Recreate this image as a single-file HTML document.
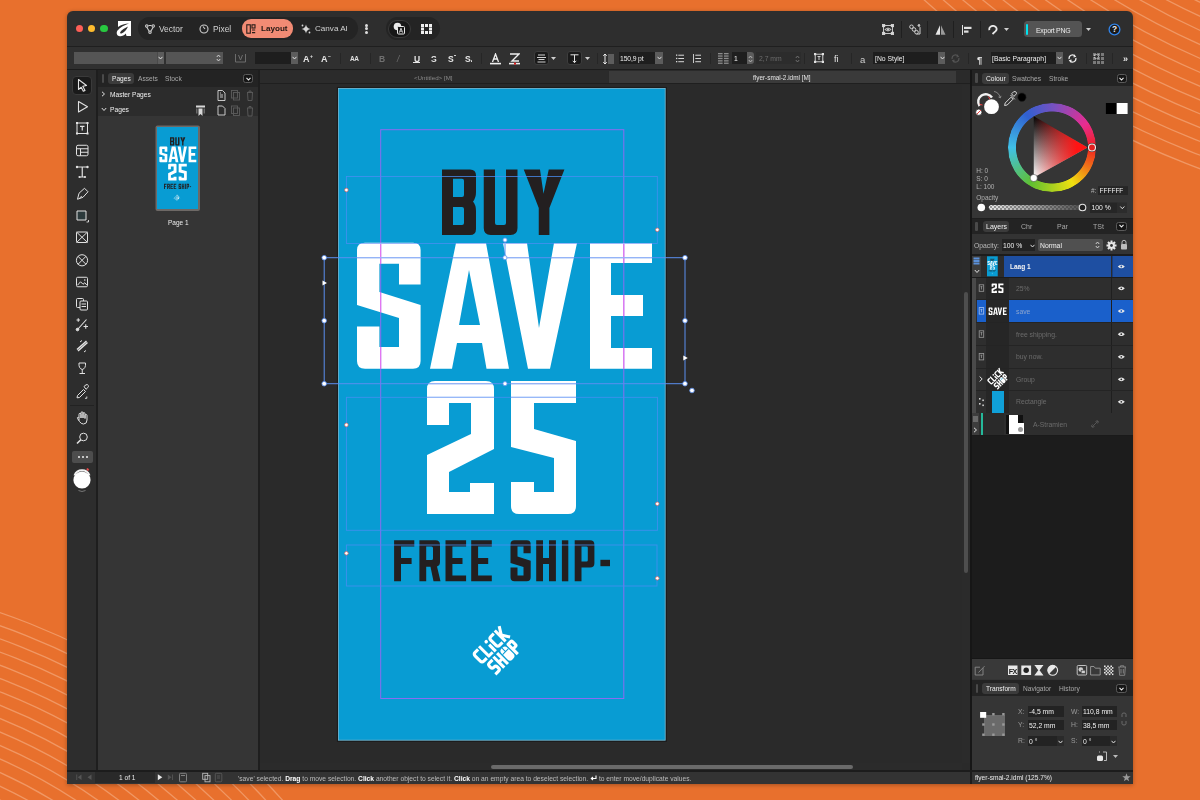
<!DOCTYPE html>
<html><head><meta charset="utf-8">
<style>
*{margin:0;padding:0;box-sizing:border-box}
html,body{width:1200px;height:800px;overflow:hidden;background:#e8702d;font-family:"Liberation Sans",sans-serif;color:#ddd}
.a{position:absolute}
#win{position:absolute;left:67px;top:11px;width:1066px;height:773px;background:#2e2e2e;border-radius:6px 6px 1px 1px;box-shadow:0 1px 4px rgba(0,0,0,.3)}
.t{position:absolute;white-space:nowrap;font-size:7px;line-height:1;will-change:transform;margin-top:0.8px}
</style></head><body>
<!-- background wavy lines -->
<svg class="a" style="left:0;top:0" width="1200" height="800" viewBox="0 0 1200 800">
 <g fill="none" stroke="#f3a577" stroke-width="1.3" opacity="0.75"><circle cx="1499" cy="-629" r="852.0"/><circle cx="1499" cy="-629" r="839.2"/><circle cx="1499" cy="-629" r="826.4"/><circle cx="1499" cy="-629" r="813.6"/><circle cx="1499" cy="-629" r="800.8"/><circle cx="1499" cy="-629" r="788.0"/><circle cx="1499" cy="-629" r="775.2"/><circle cx="1499" cy="-629" r="762.4"/><circle cx="1499" cy="-629" r="749.6"/><circle cx="1499" cy="-629" r="736.8"/><circle cx="1499" cy="-629" r="724.0"/><circle cx="1499" cy="-629" r="711.2"/><circle cx="1499" cy="-629" r="698.4"/><circle cx="-215" cy="1243" r="666.0"/><circle cx="-215" cy="1243" r="653.6"/><circle cx="-215" cy="1243" r="641.2"/><circle cx="-215" cy="1243" r="628.8"/><circle cx="-215" cy="1243" r="616.4"/><circle cx="-215" cy="1243" r="604.0"/><circle cx="-215" cy="1243" r="591.6"/><circle cx="-215" cy="1243" r="579.2"/><circle cx="-215" cy="1243" r="566.8"/><circle cx="-215" cy="1243" r="554.4"/><circle cx="-215" cy="1243" r="542.0"/><circle cx="-215" cy="1243" r="529.6"/><circle cx="-215" cy="1243" r="517.2"/><circle cx="-215" cy="1243" r="504.8"/><circle cx="-215" cy="1243" r="492.4"/><circle cx="-215" cy="1243" r="480.0"/></g>
</svg>

<div id="win"></div>
<div class="a" style="left:67px;top:46px;width:1066px;height:1px;background:#1f1f1f"></div>
<div class="a" style="left:67px;top:47px;width:1066px;height:22px;background:#303030"></div>
<div class="a" style="left:67px;top:69px;width:1066px;height:1px;background:#1c1c1c"></div>
<!-- left tools -->
<div class="a" style="left:67px;top:70px;width:29px;height:701px;background:#2d2d2d"></div>
<div class="a" style="left:96px;top:70px;width:2px;height:701px;background:#1e1e1e"></div>
<!-- pages panel -->
<div class="a" style="left:98px;top:70px;width:160px;height:701px;background:#353535"></div>
<div class="a" style="left:98px;top:70px;width:160px;height:17px;background:#232323"></div>
<div class="a" style="left:98px;top:87px;width:160px;height:29px;background:#2c2c2c"></div>
<div class="a" style="left:258px;top:70px;width:2px;height:701px;background:#1e1e1e"></div>
<!-- canvas -->
<div class="a" style="left:260px;top:70px;width:710px;height:701px;background:#2a2a2a"></div>
<div class="a" style="left:260px;top:70.5px;width:347.5px;height:12.2px;background:#2b2b2b"></div>
<div class="a" style="left:608.5px;top:70.5px;width:347.5px;height:12.2px;background:#3a3a3a"></div>
<div class="a" style="left:260px;top:82.7px;width:710px;height:1.8px;background:#1f1f1f"></div>
<div class="a" style="left:961.75px;top:84.5px;width:8.25px;height:678px;background:#2b2b2b"></div>
<div class="a" style="left:964px;top:292px;width:4px;height:280.5px;border-radius:2px;background:#4e4e4e"></div>
<div class="a" style="left:260px;top:762.5px;width:702px;height:7.5px;background:#2b2b2b"></div>
<div class="a" style="left:490.5px;top:765px;width:362px;height:3.8px;border-radius:2px;background:#6a6a6a"></div>
<div class="a" style="left:970px;top:70px;width:2px;height:701px;background:#161616"></div>
<!-- right panel -->
<div class="a" style="left:972px;top:70px;width:161px;height:701px;background:#353535"></div>
<!-- status -->
<div class="a" style="left:67px;top:770px;width:1066px;height:1.5px;background:#1c1c1c"></div>
<div class="a" style="left:67px;top:771.5px;width:1066px;height:12.5px;background:#333333"></div>
<!-- ===== TITLE BAR ===== -->
<div id="tb">
 <div class="a" style="left:75.8px;top:24.5px;width:7.6px;height:7.6px;border-radius:50%;background:#fe5f57"></div>
 <div class="a" style="left:87.9px;top:24.5px;width:7.6px;height:7.6px;border-radius:50%;background:#febc2e"></div>
 <div class="a" style="left:100.2px;top:24.5px;width:7.6px;height:7.6px;border-radius:50%;background:#28c840"></div>
 <svg class="a" style="left:116px;top:20px" width="16" height="17" viewBox="0 0 16 17">
  <path d="M2 1H15V16H10.5L9.8 13.5C8 16 5 16.5 3 16 0.5 15.3 0.2 12.5 1.5 10.5 4 7 9 5 13 3.5 9 3.5 5 5 2 7Z" fill="#fff"/>
  <path d="M12 6.5C9 8 5.5 10 4.3 12 3.8 13 4.5 13.8 5.5 13.5 8 12.8 10.5 10 12 6.5Z" fill="#2e2e2e"/>
 </svg>
 <div class="a" style="left:138px;top:17px;width:220px;height:23px;border-radius:11.5px;background:#242424"></div>
 <div class="a" style="left:386px;top:17px;width:54px;height:23px;border-radius:11.5px;background:#242424"></div>
 <div class="a" style="left:242px;top:19.4px;width:51px;height:18.4px;border-radius:9px;background:#f28b74"></div>
 <svg class="a" style="left:145px;top:24px" width="10" height="10" viewBox="0 0 10 10" fill="none" stroke="#cfcfcf" stroke-width="1.1">
  <circle cx="1.8" cy="2" r="1.2"/><circle cx="8.2" cy="2" r="1.2"/><circle cx="5" cy="8.2" r="1.2"/>
  <path d="M1.8 3.2L4.2 7.2M8.2 3.2L5.8 7.2M3.5 1.5L6.5 1.5"/>
 </svg>
 <div class="t" style="left:159px;top:24.5px;font-size:8.4px;color:#d2d2d2">Vector</div>
 <svg class="a" style="left:199px;top:24px" width="10" height="10" viewBox="0 0 10 10" fill="none" stroke="#cfcfcf" stroke-width="1.1">
  <circle cx="5" cy="5" r="4"/><path d="M4 2.5L6 5"/>
 </svg>
 <div class="t" style="left:213px;top:24.5px;font-size:8.4px;color:#d2d2d2">Pixel</div>
 <svg class="a" style="left:246px;top:24px" width="10" height="10" viewBox="0 0 10 10" fill="none" stroke="#2a1d18" stroke-width="1.1">
  <rect x="0.8" y="0.8" width="3.5" height="8.4"/><rect x="6" y="0.8" width="3" height="3.2"/><path d="M6 6H9.2M6 8.6H9.2"/>
 </svg>
 <div class="t" style="left:260.5px;top:24.5px;font-size:8.1px;color:#221814;font-weight:bold">Layout</div>
 <svg class="a" style="left:301px;top:24px" width="10" height="10" viewBox="0 0 10 10" fill="#d6d6d6">
  <path d="M5 0.5Q5.6 4.4 9.5 5 5.6 5.6 5 9.5 4.4 5.6 0.5 5 4.4 4.4 5 0.5Z"/><circle cx="1.5" cy="1.5" r="0.9"/><circle cx="8.5" cy="8.5" r="0.9"/>
 </svg>
 <div class="t" style="left:315px;top:24.5px;font-size:8.1px;color:#d2d2d2">Canva AI</div>
 <div class="a" style="left:364.5px;top:23.5px;width:3px;height:3px;border-radius:50%;background:#ddd"></div>
 <div class="a" style="left:364.5px;top:27.3px;width:3px;height:3px;border-radius:50%;background:#ddd"></div>
 <div class="a" style="left:364.5px;top:31.1px;width:3px;height:3px;border-radius:50%;background:#ddd"></div>
 <div class="a" style="left:387.5px;top:19.5px;width:23px;height:18.5px;border-radius:9px;background:#171717;border:1px solid #3a3a3a"></div>
 <svg class="a" style="left:393px;top:22px" width="12" height="13" viewBox="0 0 12 13">
  <circle cx="4.5" cy="4.5" r="3.8" fill="#e8e8e8"/><rect x="4.5" y="4.5" width="7" height="7.5" rx="1" fill="#171717" stroke="#e8e8e8" stroke-width="1"/>
  <path d="M6.3 10.7L8 6.2 9.7 10.7M6.9 9.2H9.1" fill="none" stroke="#e8e8e8" stroke-width="0.8"/>
 </svg>
 <svg class="a" style="left:420.5px;top:23.8px" width="11" height="10" viewBox="0 0 11 10" fill="#f0f0f0">
  <rect x="0" y="0" width="3" height="3"/><rect x="4" y="0" width="3" height="3"/><rect x="8" y="0" width="3" height="3"/>
  <rect x="0" y="3.5" width="3" height="3"/><rect x="8" y="3.5" width="3" height="3"/>
  <rect x="0" y="7" width="3" height="3"/><rect x="4" y="7" width="3" height="3"/><rect x="8" y="7" width="3" height="3"/>
 </svg>
 <!-- title right -->
 <svg class="a" style="left:882px;top:23.5px" width="12" height="11" viewBox="0 0 12 11" fill="none" stroke="#d8d8d8" stroke-width="0.9">
  <rect x="1.5" y="1.5" width="9" height="8"/>
  <rect x="0.3" y="0.3" width="2.4" height="2.4" fill="#d8d8d8"/><rect x="9.3" y="0.3" width="2.4" height="2.4" fill="#d8d8d8"/>
  <rect x="0.3" y="8.3" width="2.4" height="2.4" fill="#d8d8d8"/><rect x="9.3" y="8.3" width="2.4" height="2.4" fill="#d8d8d8"/>
  <path d="M2.8 5.5Q6 2.5 9.2 5.5 6 8.5 2.8 5.5Z" fill="#2e2e2e"/><circle cx="6" cy="5.5" r="1" fill="#d8d8d8" stroke="none"/>
 </svg>
 <div class="a" style="left:900.5px;top:20.5px;width:1px;height:17px;background:#1f1f1f"></div>
 <svg class="a" style="left:908.5px;top:23.5px" width="12" height="11" viewBox="0 0 12 11" fill="none" stroke="#d0d0d0" stroke-width="1">
  <circle cx="2.5" cy="2.8" r="1.8"/><circle cx="5" cy="5.5" r="1.8"/><circle cx="7.5" cy="8.2" r="1.8"/>
  <path d="M9 1.5L11 3.5V10H7.5"/><circle cx="10" cy="1.3" r="0.8" fill="#d0d0d0"/>
 </svg>
 <div class="a" style="left:927px;top:20.5px;width:1px;height:17px;background:#1f1f1f"></div>
 <svg class="a" style="left:935px;top:24.5px" width="11" height="10" viewBox="0 0 11 10">
  <path d="M0.5 9.7L5 0.3V9.7Z" fill="#e6e6e6"/><path d="M6 0.3L10.5 9.7H6Z" fill="#9a9a9a"/>
 </svg>
 <div class="a" style="left:953px;top:20.5px;width:1px;height:17px;background:#1f1f1f"></div>
 <svg class="a" style="left:961.5px;top:24.5px" width="10" height="10" viewBox="0 0 10 10" fill="#e0e0e0">
  <rect x="0" y="0" width="1" height="10"/><rect x="2" y="1.8" width="7.5" height="2.2"/><rect x="2" y="5.5" width="4.5" height="2.2"/>
 </svg>
 <div class="a" style="left:979.5px;top:20.5px;width:1px;height:17px;background:#1f1f1f"></div>
 <svg class="a" style="left:988px;top:24.5px" width="10" height="10" viewBox="0 0 10 10" fill="none" stroke="#e8e8e8" stroke-width="1.8">
  <path d="M1.5 5.2Q0.6 3 2.8 1.5 5.5 0 7.8 2 9.6 4 7.6 6.2L4.5 9"/>
 </svg>
 <svg class="a" style="left:1003.5px;top:27.5px" width="5" height="3" viewBox="0 0 5 3"><path d="M0 0H5L2.5 3Z" fill="#cfcfcf"/></svg>
 <div class="a" style="left:1023.7px;top:21.4px;width:58.7px;height:15.4px;border-radius:3.5px;background:#545454"></div>
 <div class="a" style="left:1025.8px;top:23.9px;width:2.5px;height:10.9px;background:#00e3ef;border-radius:1px"></div>
 <div class="t" style="left:1035.8px;top:25.8px;font-size:7px;letter-spacing:-0.3px;color:#eaeaea">Export PNG</div>
 <svg class="a" style="left:1085.5px;top:27.5px" width="5" height="3" viewBox="0 0 5 3"><path d="M0 0H5L2.5 3Z" fill="#cfcfcf"/></svg>
 <svg class="a" style="left:1108px;top:22.5px" width="13" height="13" viewBox="0 0 13 13">
  <circle cx="6.5" cy="6.5" r="5.4" fill="#1a1a1a" stroke="#3183e8" stroke-width="1.3"/>
  <text x="6.5" y="9.4" font-size="8.3" font-weight="bold" text-anchor="middle" fill="#f2f2f2" font-family="Liberation Sans">?</text>
 </svg>
</div>

<!-- ===== CONTEXT TOOLBAR ===== -->
<div id="ctx">
 <div class="a" style="left:73.7px;top:52.4px;width:90px;height:11.6px;background:#555"></div>
 <div class="a" style="left:156.5px;top:52.4px;width:7.1px;height:11.6px;background:#5c5c5c;border-left:1px solid #4a4a4a"></div>
 <svg class="a" style="left:158px;top:56px" width="5" height="4" viewBox="0 0 5 4"><path d="M0.5 0.8L2.5 3 4.5 0.8" fill="none" stroke="#ddd" stroke-width="1"/></svg>
 <div class="a" style="left:165.7px;top:52.4px;width:57px;height:11.6px;background:#555"></div>
 <svg class="a" style="left:216px;top:54px" width="5" height="8" viewBox="0 0 5 8"><path d="M0.8 3L2.5 1 4.2 3M0.8 5L2.5 7 4.2 5" fill="none" stroke="#ddd" stroke-width="0.9"/></svg>
 <svg class="a" style="left:234px;top:52.5px" width="13" height="10" viewBox="0 0 13 10" fill="none" stroke="#6c6c6c" stroke-width="1">
  <path d="M1.5 1V9H11.5V1"/><path d="M4.5 2L6.5 7 8.5 2"/>
 </svg>
 <div class="a" style="left:254.7px;top:52.4px;width:36px;height:11.6px;background:#1e1e1e"></div>
 <div class="a" style="left:290.7px;top:52.4px;width:7.2px;height:11.6px;background:#5c5c5c"></div>
 <svg class="a" style="left:292px;top:56px" width="5" height="4" viewBox="0 0 5 4"><path d="M0.5 0.8L2.5 3 4.5 0.8" fill="none" stroke="#ddd" stroke-width="1"/></svg>
 <div class="t" style="left:303px;top:54.5px;font-size:9px;font-weight:bold;color:#e6e6e6">A</div><div class="t" style="left:309.5px;top:53.5px;font-size:5px;font-weight:bold;color:#e6e6e6">+</div>
 <div class="t" style="left:321.3px;top:54.5px;font-size:9px;font-weight:bold;color:#e6e6e6">A</div><div class="t" style="left:327.8px;top:53px;font-size:5px;font-weight:bold;color:#e6e6e6">&minus;</div>
 <div class="a" style="left:339.5px;top:53px;width:1px;height:11px;background:#262626"></div>
 <div class="t" style="left:349.5px;top:55.5px;font-size:6.5px;font-weight:bold;color:#e0e0e0;letter-spacing:-0.5px">AA</div>
 <div class="a" style="left:370px;top:53px;width:1px;height:11px;background:#262626"></div>
 <div class="t" style="left:379.2px;top:54.5px;font-size:8.5px;font-weight:bold;color:#707070">B</div>
 <div class="t" style="left:397px;top:54.5px;font-size:8.5px;font-style:italic;color:#707070">/</div>
 <div class="t" style="left:413.5px;top:54px;font-size:8.5px;font-weight:bold;color:#e6e6e6">U</div>
 <div class="a" style="left:413px;top:62px;width:7.3px;height:1px;background:#e6e6e6"></div>
 <div class="t" style="left:431px;top:54.5px;font-size:8.5px;font-weight:bold;color:#e6e6e6">S</div>
 <div class="a" style="left:430.5px;top:58.3px;width:7px;height:0.9px;background:#303030"></div>
 <div class="t" style="left:447.6px;top:54.5px;font-size:8.5px;font-weight:bold;color:#e6e6e6">S</div><div class="a" style="left:454px;top:54.5px;width:1.8px;height:1.8px;background:#e6e6e6;border-radius:50%"></div>
 <div class="t" style="left:464.6px;top:54.5px;font-size:8.5px;font-weight:bold;color:#e6e6e6">S</div><div class="a" style="left:470.5px;top:60px;width:1.8px;height:1.8px;background:#e6e6e6;border-radius:50%"></div>
 <div class="a" style="left:480.5px;top:53px;width:1px;height:11px;background:#262626"></div>
 <svg class="a" style="left:489.5px;top:52.5px" width="11" height="12" viewBox="0 0 11 12">
  <path d="M2.5 9L5.5 1 8.5 9M3.8 6H7.2" fill="none" stroke="#eee" stroke-width="1.3"/><rect x="0" y="9.8" width="11" height="1.6" fill="#eee"/>
 </svg>
 <svg class="a" style="left:508.5px;top:52.5px" width="11" height="12" viewBox="0 0 11 12">
  <path d="M1 1H10L3 8H10" fill="none" stroke="#eee" stroke-width="1.4"/><rect x="0" y="9.8" width="11" height="1.6" fill="#eee"/><rect x="5" y="9.6" width="2" height="2" fill="#e02020"/>
 </svg>
 <div class="a" style="left:533.5px;top:51.2px;width:15.5px;height:14.2px;border-radius:3px;background:#1a1a1a;border:1px solid #3d3d3d"></div>
 <svg class="a" style="left:537px;top:54px" width="9" height="9" viewBox="0 0 9 9" fill="#d0d0d0"><rect x="1" y="0.5" width="7" height="1"/><rect x="0" y="3" width="9" height="1"/><rect x="1.5" y="5" width="6" height="1"/><rect x="0.5" y="7.5" width="8" height="1"/></svg>
 <svg class="a" style="left:551px;top:57px" width="5" height="3" viewBox="0 0 5 3"><path d="M0 0H5L2.5 3Z" fill="#cfcfcf"/></svg>
 <div class="a" style="left:566.8px;top:51.2px;width:15.6px;height:14.2px;border-radius:3px;background:#1a1a1a;border:1px solid #3d3d3d"></div>
 <svg class="a" style="left:570px;top:53.5px" width="9" height="10" viewBox="0 0 9 10" fill="none" stroke="#e0e0e0" stroke-width="1"><path d="M0.5 0.8H8.5M4.5 0.8V8.5M2.8 6.8L4.5 8.7 6.2 6.8"/></svg>
 <svg class="a" style="left:584.5px;top:57px" width="5" height="3" viewBox="0 0 5 3"><path d="M0 0H5L2.5 3Z" fill="#cfcfcf"/></svg>
 <div class="a" style="left:596.5px;top:53px;width:1px;height:11px;background:#262626"></div>
 <svg class="a" style="left:602.5px;top:52.5px" width="11" height="12" viewBox="0 0 11 12">
  <path d="M2 1V11M0.3 2.8L2 1 3.7 2.8M0.3 9.2L2 11 3.7 9.2" fill="none" stroke="#eee" stroke-width="1"/>
  <g fill="#8a8a8a"><rect x="5" y="1.5" width="6" height="1"/><rect x="5" y="3.5" width="6" height="1"/><rect x="5" y="5.5" width="6" height="1"/><rect x="5" y="7.5" width="6" height="1"/><rect x="5" y="9.5" width="6" height="1"/></g>
 </svg>
 <div class="a" style="left:618.5px;top:52.4px;width:37px;height:11.6px;background:#1e1e1e"></div>
 <div class="t" style="left:620px;top:55.3px;font-size:6.8px;letter-spacing:-0.15px;color:#eee">150,9 pt</div>
 <div class="a" style="left:655.3px;top:52.4px;width:7.3px;height:11.6px;background:#5c5c5c"></div>
 <svg class="a" style="left:656.5px;top:56px" width="5" height="4" viewBox="0 0 5 4"><path d="M0.5 0.8L2.5 3 4.5 0.8" fill="none" stroke="#ddd" stroke-width="1"/></svg>
 <svg class="a" style="left:676.4px;top:53.8px" width="8" height="9" viewBox="0 0 8 9" fill="#d8d8d8">
  <rect x="0" y="0.5" width="1.3" height="1.3"/><rect x="0" y="3.8" width="1.3" height="1.3"/><rect x="0" y="7" width="1.3" height="1.3"/>
  <rect x="2.3" y="0.7" width="5.7" height="1"/><rect x="2.3" y="4" width="5.7" height="1"/><rect x="2.3" y="7.2" width="5.7" height="1"/>
 </svg>
 <svg class="a" style="left:693.4px;top:53.8px" width="8" height="9" viewBox="0 0 8 9" fill="#d8d8d8">
  <rect x="0" y="0" width="0.9" height="9"/>
  <rect x="2.3" y="0.7" width="5.7" height="1"/><rect x="2.3" y="4" width="5.7" height="1"/><rect x="2.3" y="7.2" width="5.7" height="1"/>
 </svg>
 <div class="a" style="left:710.4px;top:53px;width:1px;height:11px;background:#262626"></div>
 <svg class="a" style="left:717.5px;top:52.7px" width="11" height="11" viewBox="0 0 11 11" fill="#8c8c8c">
  <rect x="0" y="0" width="4.6" height="1.3"/><rect x="0" y="2.4" width="4.6" height="1.3"/><rect x="0" y="4.8" width="4.6" height="1.3"/><rect x="0" y="7.2" width="4.6" height="1.3"/><rect x="0" y="9.6" width="4.6" height="1.3"/>
  <rect x="6" y="0" width="4.6" height="1.3"/><rect x="6" y="2.4" width="4.6" height="1.3"/><rect x="6" y="4.8" width="4.6" height="1.3"/><rect x="6" y="7.2" width="4.6" height="1.3"/><rect x="6" y="9.6" width="4.6" height="1.3"/>
 </svg>
 <div class="a" style="left:732.3px;top:52.4px;width:15px;height:11.6px;background:#1e1e1e"></div>
 <div class="t" style="left:734px;top:55.3px;font-size:6.8px;color:#eee">1</div>
 <div class="a" style="left:747.2px;top:52.4px;width:7.1px;height:11.6px;background:#5c5c5c;border-radius:0 3px 3px 0"></div>
 <svg class="a" style="left:748.3px;top:54.5px" width="5" height="8" viewBox="0 0 5 8"><path d="M0.8 3L2.5 1 4.2 3M0.8 5L2.5 7 4.2 5" fill="none" stroke="#bbb" stroke-width="0.9"/></svg>
 <div class="a" style="left:756.4px;top:52.4px;width:45px;height:11.6px;background:#2c2c2c"></div>
 <div class="t" style="left:758.5px;top:55.3px;font-size:6.8px;color:#6c6c6c">2,7 mm</div>
 <svg class="a" style="left:794.5px;top:54.5px" width="5" height="8" viewBox="0 0 5 8"><path d="M0.8 3L2.5 1 4.2 3M0.8 5L2.5 7 4.2 5" fill="none" stroke="#777" stroke-width="0.9"/></svg>
 <div class="a" style="left:803.9px;top:53px;width:1px;height:11px;background:#262626"></div>
 <svg class="a" style="left:813.5px;top:53.3px" width="10" height="10" viewBox="0 0 10 10" fill="none" stroke="#e0e0e0" stroke-width="0.9">
  <rect x="1.2" y="1.2" width="7.6" height="7.6"/><path d="M3.5 3.5H6.5M5 3.5V7"/>
  <g fill="#e0e0e0" stroke="none"><rect x="0" y="0" width="2.2" height="2.2"/><rect x="7.8" y="0" width="2.2" height="2.2"/><rect x="0" y="7.8" width="2.2" height="2.2"/><rect x="7.8" y="7.8" width="2.2" height="2.2"/></g>
 </svg>
 <div class="t" style="left:834px;top:54.3px;font-size:9px;color:#e6e6e6">fi</div>
 <div class="a" style="left:850.5px;top:53px;width:1px;height:11px;background:#262626"></div>
 <div class="t" style="left:859.5px;top:54px;font-size:9.5px;color:#cfcfcf">a</div>
 <div class="a" style="left:873.2px;top:52.4px;width:65px;height:11.6px;background:#1e1e1e"></div>
 <div class="t" style="left:874.6px;top:55.3px;font-size:6.8px;color:#eee">[No Style]</div>
 <div class="a" style="left:938.3px;top:52.4px;width:7.1px;height:11.6px;background:#5c5c5c"></div>
 <svg class="a" style="left:939.5px;top:56px" width="5" height="4" viewBox="0 0 5 4"><path d="M0.5 0.8L2.5 3 4.5 0.8" fill="none" stroke="#ddd" stroke-width="1"/></svg>
 <svg class="a" style="left:950.5px;top:53.5px" width="9" height="9" viewBox="0 0 9 9" fill="none" stroke="#555" stroke-width="1.2"><path d="M1.2 5A3.3 3.3 0 0 1 7 2.2M7.8 4A3.3 3.3 0 0 1 2 6.8M6 0.8L7.2 2.4 5.4 3M3 8.2L1.8 6.6 3.6 6"/></svg>
 <div class="a" style="left:968px;top:53px;width:1px;height:11px;background:#262626"></div>
 <div class="t" style="left:977px;top:54.2px;font-size:9.5px;font-weight:bold;color:#e6e6e6">&para;</div>
 <div class="a" style="left:991px;top:52.4px;width:64.7px;height:11.6px;background:#1e1e1e"></div>
 <div class="t" style="left:992.3px;top:55.3px;font-size:6.8px;color:#eee">[Basic Paragraph]</div>
 <div class="a" style="left:1055.7px;top:52.4px;width:7.3px;height:11.6px;background:#5c5c5c"></div>
 <svg class="a" style="left:1057px;top:56px" width="5" height="4" viewBox="0 0 5 4"><path d="M0.5 0.8L2.5 3 4.5 0.8" fill="none" stroke="#ddd" stroke-width="1"/></svg>
 <svg class="a" style="left:1067.5px;top:53.5px" width="9" height="9" viewBox="0 0 9 9" fill="none" stroke="#f0f0f0" stroke-width="1.3"><path d="M1.2 5A3.3 3.3 0 0 1 7 2.2M7.8 4A3.3 3.3 0 0 1 2 6.8M6 0.8L7.2 2.4 5.4 3M3 8.2L1.8 6.6 3.6 6"/></svg>
 <div class="a" style="left:1085.7px;top:53px;width:1px;height:11px;background:#262626"></div>
 <svg class="a" style="left:1093px;top:53px" width="11" height="11" viewBox="0 0 11 11" fill="#7a7a7a">
  <rect x="0" y="0" width="3" height="3"/><rect x="4" y="0" width="3" height="3"/><rect x="8" y="0" width="3" height="3"/>
  <rect x="0" y="4" width="3" height="3"/><rect x="4" y="4" width="3" height="3"/><rect x="8" y="4" width="3" height="3"/>
  <rect x="0" y="8" width="3" height="3"/><rect x="4" y="8" width="3" height="3"/><rect x="8" y="8" width="3" height="3"/>
  <path d="M1.5 1.5H5.5V5.5H1.5Z" fill="none" stroke="#ddd" stroke-width="0.8" stroke-dasharray="1 0.8"/>
 </svg>
 <div class="a" style="left:1111.7px;top:53px;width:1px;height:11px;background:#262626"></div>
 <div class="t" style="left:1122.5px;top:54px;font-size:9px;font-weight:bold;color:#e6e6e6">&raquo;</div>
</div>

<!-- ===== LEFT TOOLS ===== -->
<div id="tools">
 <div class="a" style="left:72.3px;top:75.5px;width:20px;height:19px;border-radius:4px;background:#1a1a1a;border:1px solid #3a3a3a"></div>
 <svg class="a" style="left:0;top:0" width="100" height="500" viewBox="0 0 100 500" fill="none" stroke="#e2e2e2" stroke-width="1" stroke-linejoin="round">
  <!-- select -->
  <path d="M78.5 79.5L86.5 85.5 82.8 86.2 85 90.5 83.3 91.3 81.2 87.2 78.5 89.5Z" stroke-width="1.1"/>
  <!-- node -->
  <path d="M78.5 101.5L87.5 106.8 78.5 112Z" stroke-width="1.1"/>
  <!-- text frame -->
  <rect x="77" y="123" width="10.5" height="10.5"/>
  <path d="M80 126.3H84.5M82.25 126.3V130.5" stroke-width="1.2"/>
  <g fill="#e2e2e2" stroke="none"><rect x="76" y="122" width="2" height="2"/><rect x="86.5" y="122" width="2" height="2"/><rect x="76" y="132.5" width="2" height="2"/><rect x="86.5" y="132.5" width="2" height="2"/></g>
  <!-- table -->
  <g transform="translate(0 1.25)">
  <rect x="76.5" y="144" width="11.5" height="10.5" rx="1.5"/>
  <path d="M76.5 147.5H88M80.5 147.5V154.5M80.5 151H88"/>
    </g>
<!-- artistic text -->
  <g transform="translate(0 1)">
  <path d="M77 166H87.5M82.25 166V176M79.5 176H85" stroke-width="1.2"/>
  <g fill="#e2e2e2" stroke="none"><circle cx="77" cy="166" r="1.2"/><circle cx="87.5" cy="166" r="1.2"/><circle cx="79.5" cy="176" r="1.1"/><circle cx="85" cy="176" r="1.1"/></g>
    </g>
<!-- pen -->
  <g transform="translate(0 0.75)">
  <path d="M77.5 198.5L79 192.5 84.5 187.5 88 191 83 196.5Z M79.8 197.2L81.8 195.2"/>
    </g>
<!-- rectangle -->
  <g transform="translate(0 2.5)">
  <rect x="77" y="208.5" width="9" height="9" fill="#2c3a3c"/>
  <path d="M86.5 219.5H88.5V217.5" stroke-width="0.9"/>
    </g>
<!-- picture frame X -->
  <g transform="translate(0 2)">
  <rect x="76.5" y="230" width="11" height="10.5" rx="1"/>
  <path d="M76.5 230L87.5 240.5M87.5 230L76.5 240.5"/>
    </g>
<!-- ellipse frame -->
  <g transform="translate(0 2.3)">
  <circle cx="82" cy="258" r="5.6"/>
  <path d="M78 254L86 262M86 254L78 262"/>
    </g>
<!-- picture -->
  <g transform="translate(0 1.25)">
  <rect x="76.5" y="276" width="11" height="9.5" rx="1.2"/>
  <path d="M77.5 284L80.5 280.5 83 283 84.8 281.5 87 284"/><circle cx="84.8" cy="278.7" r="0.8" fill="#e2e2e2" stroke="none"/>
    </g>
<!-- paste style -->
  <rect x="76.5" y="298.5" width="7" height="9" rx="1"/>
  <rect x="80" y="301" width="7.5" height="9" rx="1" fill="#2d2d2d"/>
  <path d="M81.5 304H86M81.5 306.5H86"/>
  <!-- add node -->
  <path d="M77.5 329.5L86.5 319.5" stroke-width="1.1"/><circle cx="77.5" cy="329.5" r="1.3" fill="#e2e2e2"/>
  <path d="M76.5 320H80M78.25 318.2V321.8M83.5 326.5H88M85.75 324.3V328.7" stroke-width="1.1"/>
  <!-- knife -->
  <path d="M77 349.5L86.5 341M78 351L87.5 342.5" stroke-width="1.5"/>
  <path d="M80 342L82 340.5M84 352L86 350.5"/>
  <!-- transparency -->
  <path d="M79 363H85.5Q86 368.5 82.25 369.5 78.5 368.5 79 363Z M82.25 369.5V373.5M79.5 373.5H85"/>
  <!-- eyedropper -->
  <path d="M77.5 395.5L83.5 389.5 85.5 391.5 79.5 397.5 77 397.8Z M84 386.5L86 384.8Q87.5 384 88.3 385.5 88.8 386.7 87.8 387.6L86 389.3Z"/>
  <path d="M86.8 396.5V398.3H85" stroke-width="0.9"/>
  <!-- hand -->
  <path d="M79 420.5V414.5Q79 413.3 80 413.3 81 413.3 81 414.5V418 413Q81 411.8 82 411.8 83 411.8 83 413V418 413.8Q83 412.6 84 412.6 85 412.6 85 413.8V418.5 415.5Q85 414.5 86 414.5 87 414.5 87 415.5V420Q87 424 83.5 424 81 424 79.5 421.5L77.5 418.5Q77 417.5 78 417.2 78.6 417.1 79 417.8"/>
  <!-- zoom -->
  <circle cx="83.5" cy="437" r="3.8"/><path d="M80.8 439.7L77 443.5" stroke-width="1.6"/>
 </svg>
 <div class="a" style="left:70px;top:405.2px;width:24px;height:1px;background:#222"></div>
 <div class="a" style="left:71.8px;top:450.6px;width:21.5px;height:12.9px;border-radius:2px;background:#4d4d4d"></div>
 <div class="a" style="left:77.5px;top:456px;width:2px;height:2px;border-radius:50%;background:#eee"></div>
 <div class="a" style="left:81.5px;top:456px;width:2px;height:2px;border-radius:50%;background:#eee"></div>
 <div class="a" style="left:85.5px;top:456px;width:2px;height:2px;border-radius:50%;background:#eee"></div>
 <svg class="a" style="left:70px;top:463px" width="24" height="30" viewBox="0 0 24 30">
  <path d="M4.5 12.5A8 8 0 0 1 19.5 12.5" fill="none" stroke="#f2f2f2" stroke-width="2"/>
  <path d="M17 5.5L18.5 7.5" stroke="#e84a4a" stroke-width="2"/>
  <circle cx="12" cy="17" r="8.6" fill="#ffffff"/>
  <path d="M8.5 27.5Q12 29.5 15.5 27.5" fill="none" stroke="#888" stroke-width="0.8"/>
 </svg>
</div>

<!-- ===== PAGES PANEL ===== -->
<div id="pages">
 <div class="a" style="left:101.7px;top:73.5px;width:2.5px;height:9.5px;border-radius:1px;background:#4a4a4a"></div>
 <div class="a" style="left:108.3px;top:72.8px;width:25.3px;height:11.3px;border-radius:3px;background:#3b3b3b"></div>
 <div class="t" style="left:111.5px;top:75px;font-size:6.6px;color:#f0f0f0">Pages</div>
 <div class="t" style="left:137.7px;top:75px;font-size:6.6px;color:#a8a8a8">Assets</div>
 <div class="t" style="left:165px;top:75px;font-size:6.7px;color:#a8a8a8">Stock</div>
 <div class="a" style="left:242.9px;top:74.2px;width:10.3px;height:8.8px;border-radius:2.5px;background:#161616;border:1px solid #5a5a5a"></div>
 <svg class="a" style="left:245.5px;top:76.5px" width="5" height="4" viewBox="0 0 5 4"><path d="M0.5 0.8L2.5 3 4.5 0.8" fill="none" stroke="#f0f0f0" stroke-width="1.1"/></svg>
 <svg class="a" style="left:101px;top:91px" width="5" height="6" viewBox="0 0 5 6"><path d="M1 0.8L3.5 3 1 5.2" fill="none" stroke="#e0e0e0" stroke-width="1"/></svg>
 <div class="t" style="left:109.7px;top:91.3px;font-size:6.6px;color:#f0f0f0">Master Pages</div>
 <svg class="a" style="left:101px;top:107px" width="6" height="5" viewBox="0 0 6 5"><path d="M0.8 1L3 3.5 5.2 1" fill="none" stroke="#e0e0e0" stroke-width="1"/></svg>
 <div class="t" style="left:109.7px;top:106.3px;font-size:6.7px;color:#f0f0f0">Pages</div>
 <svg class="a" style="left:0;top:0" width="260" height="120" viewBox="0 0 260 120" fill="none" stroke-width="0.9">
  <g stroke="#d8d8d8"><path d="M218 90.5H222.5L225 93V100.5H218Z"/><path d="M220 93H221M220 95H223M220 97H223"/></g>
  <g stroke="#5c5c5c"><rect x="231.5" y="90.5" width="6" height="7.5"/><rect x="233.5" y="92.5" width="6" height="7.5"/></g>
  <g stroke="#5c5c5c"><path d="M247 92.5H253M249 92.5V91H251V92.5M247.5 92.5L248 100.5H252L252.5 92.5"/></g>
  <g stroke="#d8d8d8"><path d="M218 106H222.5L225 108.5V115H218Z"/></g>
  <g stroke="#5c5c5c"><rect x="231.5" y="106" width="6" height="7.5"/><rect x="233.5" y="108" width="6" height="7.5"/></g>
  <g stroke="#5c5c5c"><path d="M247 108H253M249 108V106.5H251V108M247.5 108L248 116H252L252.5 108"/></g>
  <g fill="#d8d8d8" stroke="none"><rect x="196" y="105.5" width="9" height="2"/><path d="M198.5 108.5H202.5V116L200.5 114 198.5 116Z"/></g>
  <g fill="#6a6a6a" stroke="none"><rect x="196" y="108.5" width="1.5" height="5"/><rect x="203.5" y="108.5" width="1.5" height="5"/></g>
 </svg>
 <div class="t" style="left:167.7px;top:219.3px;font-size:6.5px;color:#ececec">Page 1</div>
</div>

<!-- ===== RIGHT PANEL ===== -->
<div id="rp">
 <!-- colour tabs -->
 <div class="a" style="left:972px;top:70px;width:161px;height:16.3px;background:#232323"></div>
 <div class="a" style="left:975.4px;top:73.4px;width:2.5px;height:9.6px;border-radius:1px;background:#4a4a4a"></div>
 <div class="a" style="left:982px;top:72.8px;width:26.7px;height:11.2px;border-radius:3px;background:#3b3b3b"></div>
 <div class="t" style="left:985.6px;top:75px;font-size:6.7px;color:#f0f0f0">Colour</div>
 <div class="t" style="left:1012.4px;top:75px;font-size:6.7px;color:#a8a8a8">Swatches</div>
 <div class="t" style="left:1048.5px;top:75px;font-size:6.7px;color:#a8a8a8">Stroke</div>
 <div class="a" style="left:1116.5px;top:74.1px;width:10.5px;height:8.9px;border-radius:2.5px;background:#161616;border:1px solid #5a5a5a"></div>
 <svg class="a" style="left:1119.2px;top:76.5px" width="5" height="4" viewBox="0 0 5 4"><path d="M0.5 0.8L2.5 3 4.5 0.8" fill="none" stroke="#f0f0f0" stroke-width="1.1"/></svg>
 <div class="a" style="left:1007.5px;top:103px;width:88.8px;height:89px;border-radius:50%;background:conic-gradient(from 90deg,#f02020,#f07818 30deg,#f0e010 60deg,#60c030 120deg,#40c0e8 180deg,#3060d0 232deg,#7c50c0 275deg,#e82c90 325deg,#f02020 360deg);-webkit-mask:radial-gradient(circle,transparent 35.6px,#000 36.4px);mask:radial-gradient(circle,transparent 35.6px,#000 36.4px)"></div>
 <svg class="a" style="left:0;top:0" width="1200" height="260" viewBox="0 0 1200 260">
  <defs>
   <linearGradient id="tg1" x1="0" y1="0" x2="0" y2="1"><stop offset="0" stop-color="#000"/><stop offset="1" stop-color="#fff"/></linearGradient>
   <linearGradient id="tg2" x1="0" y1="0" x2="1" y2="0"><stop offset="0" stop-color="#ff1414" stop-opacity="0"/><stop offset="0.8" stop-color="#ff1414" stop-opacity="1"/></linearGradient>
   <pattern id="chk" width="4" height="4" patternUnits="userSpaceOnUse"><rect width="4" height="4" fill="#e8e8e8"/><rect width="2" height="2" fill="#9a9a9a"/><rect x="2" y="2" width="2" height="2" fill="#9a9a9a"/></pattern>
   <linearGradient id="opg" x1="0" y1="0" x2="1" y2="0"><stop offset="0" stop-color="#353535" stop-opacity="0"/><stop offset="1" stop-color="#353535" stop-opacity="0.85"/></linearGradient>
  </defs>
  <!-- colour tool icon -->
  <path d="M979.5 106A7 7 0 0 1 992 97.5" fill="none" stroke="#f2f2f2" stroke-width="2.4"/>
  <path d="M988.3 96.5L990 99.3M979.5 104.2L982.5 105" stroke="#e84040" stroke-width="1"/>
  <circle cx="991.5" cy="106.7" r="7.4" fill="#fff"/>
  <circle cx="978.8" cy="112.2" r="3.2" fill="#fff" stroke="#222" stroke-width="0.8"/>
  <path d="M976.8 114.2L980.8 110.2" stroke="#e84040" stroke-width="1"/>
  <path d="M994 91.5Q998.5 92 1000.3 97.5M998.5 97L1000.4 97.8 1001 95.8" fill="none" stroke="#9a9a9a" stroke-width="0.8"/>
  <!-- eyedropper -->
  <path d="M1005.2 103L1011 97.2 1013 99.2 1007.2 105 1004.6 105.5Z M1011.6 93.8L1013.6 91.8Q1015.2 91 1016.2 92.2 1017 93.6 1015.8 94.6L1013.8 96.4Z M1010.5 95L1014.8 99.3" fill="none" stroke="#e8e8e8" stroke-width="0.9"/>
  <circle cx="1021.9" cy="97.2" r="4.2" fill="#000" stroke="#222" stroke-width="0.6"/>
  <rect x="1105.9" y="103" width="10.8" height="11" fill="#000"/>
  <rect x="1116.7" y="103" width="10.9" height="11" fill="#fff"/>
  <!-- triangle -->
  <path d="M1033.75 116.25L1087.5 147.5 1033.75 177.5Z" fill="url(#tg1)"/>
  <path d="M1033.75 116.25L1087.5 147.5 1033.75 177.5Z" fill="url(#tg2)"/>
  <circle cx="1092" cy="147.5" r="4.6" fill="#222"/><circle cx="1092" cy="147.5" r="3.5" fill="#e02020" stroke="#f0f0f0" stroke-width="1.1"/>
  <circle cx="1033.75" cy="178" r="3.6" fill="#fff" stroke="#333" stroke-width="0.5"/>
  <!-- HSL -->
  <g font-family="Liberation Sans" font-size="6.5" fill="#b0b0b0">
   <text x="976.3" y="172.5">H: 0</text><text x="976.3" y="180.8">S: 0</text><text x="976.3" y="188.8">L: 100</text>
   <text x="976.3" y="199.5">Opacity</text>
   <text x="1091" y="193">#:</text>
  </g>
  <rect x="1098" y="186.2" width="30" height="8.8" fill="#262626"/>
  <text x="1099.5" y="193.2" font-family="Liberation Sans" font-size="6.5" fill="#f0f0f0">FFFFFF</text>
  <!-- opacity slider -->
  <circle cx="981.3" cy="207.5" r="3.8" fill="#fff"/>
  <rect x="988.8" y="205" width="93.7" height="5" rx="2.5" fill="url(#chk)"/>
  <rect x="988.8" y="205" width="93.7" height="5" rx="2.5" fill="url(#opg)"/>
  <circle cx="1082.5" cy="207.5" r="3.3" fill="#222" stroke="#e8e8e8" stroke-width="1.1"/>
  <rect x="1090" y="202.5" width="27.5" height="10.5" fill="#262626"/>
  <text x="1091.5" y="210.3" font-family="Liberation Sans" font-size="6.8" fill="#f0f0f0">100 %</text>
  <rect x="1117.5" y="202.5" width="9.5" height="10.5" fill="#2c2c2c"/>
  <path d="M1120.3 206.5L1122.3 208.7 1124.3 206.5" fill="none" stroke="#e0e0e0" stroke-width="1"/>
 </svg>

 <!-- layers tabs -->
 <div class="a" style="left:972px;top:217.5px;width:161px;height:1px;background:#1e1e1e"></div>
 <div class="a" style="left:972px;top:218.5px;width:161px;height:15.3px;background:#232323"></div>
 <div class="a" style="left:975.4px;top:221.5px;width:2.5px;height:9.5px;border-radius:1px;background:#4a4a4a"></div>
 <div class="a" style="left:982.5px;top:220.6px;width:26.3px;height:11.2px;border-radius:3px;background:#3b3b3b"></div>
 <div class="t" style="left:985.8px;top:222.7px;font-size:7px;color:#f0f0f0">Layers</div>
 <div class="t" style="left:1021.3px;top:222.7px;font-size:7px;color:#a8a8a8">Chr</div>
 <div class="t" style="left:1056.8px;top:222.7px;font-size:7px;color:#a8a8a8">Par</div>
 <div class="t" style="left:1092.5px;top:222.7px;font-size:7px;color:#a8a8a8">TSt</div>
 <div class="a" style="left:1116px;top:221.8px;width:11px;height:8.9px;border-radius:2.5px;background:#161616;border:1px solid #5a5a5a"></div>
 <svg class="a" style="left:1118.9px;top:224.2px" width="5" height="4" viewBox="0 0 5 4"><path d="M0.5 0.8L2.5 3 4.5 0.8" fill="none" stroke="#f0f0f0" stroke-width="1.1"/></svg>
 <!-- opacity row -->
 <div class="a" style="left:972px;top:233.8px;width:161px;height:20.5px;background:#333"></div>
 <div class="t" style="left:974px;top:242.3px;font-size:6.8px;color:#b8b8b8">Opacity:</div>
 <div class="a" style="left:1001.5px;top:239.4px;width:33.4px;height:11.2px;background:#222"></div>
 <div class="t" style="left:1003px;top:242.3px;font-size:6.8px;color:#f0f0f0">100 %</div>
 <svg class="a" style="left:1029.8px;top:243.5px" width="5" height="4" viewBox="0 0 5 4"><path d="M0.5 0.8L2.5 3 4.5 0.8" fill="none" stroke="#ddd" stroke-width="1"/></svg>
 <div class="a" style="left:1038px;top:239.2px;width:64.5px;height:11.6px;border-radius:2px;background:#505050"></div>
 <div class="t" style="left:1040px;top:242.3px;font-size:6.8px;color:#f0f0f0">Normal</div>
 <svg class="a" style="left:1095px;top:241px" width="5" height="8" viewBox="0 0 5 8"><path d="M0.8 3L2.5 1 4.2 3M0.8 5L2.5 7 4.2 5" fill="none" stroke="#ddd" stroke-width="0.9"/></svg>
 <svg class="a" style="left:1105.5px;top:239.5px" width="11" height="11" viewBox="0 0 11 11"><g transform="translate(5.5 5.5)" fill="#e8e8e8"><circle r="3.3"/><rect x="-1" y="-5" width="2" height="10"/><rect x="-1" y="-5" width="2" height="10" transform="rotate(45)"/><rect x="-1" y="-5" width="2" height="10" transform="rotate(90)"/><rect x="-1" y="-5" width="2" height="10" transform="rotate(135)"/><circle r="1.4" fill="#333"/></g></svg>
 <svg class="a" style="left:1119.5px;top:239px" width="8" height="11" viewBox="0 0 8 11"><path d="M2 5V3.3A2 2 0 0 1 6 3.3V5" fill="none" stroke="#bbb" stroke-width="1"/><rect x="1" y="5" width="6" height="5.5" rx="0.8" fill="#bbb"/></svg>
 <!-- layer list bg -->
 <div class="a" style="left:972px;top:254.3px;width:161px;height:404px;background:#1c1c1c"></div>
</div>

<!-- ===== LAYERS ===== -->
<div id="layers">
 <!-- row 1 -->
 <div class="a" style="left:972px;top:255.6px;width:161px;height:21.9px;background:#2c2c2c"></div>
 <div class="a" style="left:971.5px;top:255.6px;width:9px;height:21.9px;background:#3c3c3c"></div>
 <svg class="a" style="left:973px;top:257px" width="7" height="8" viewBox="0 0 7 8" fill="#5a8fd8"><rect x="0.5" y="0.5" width="6" height="2"/><rect x="0.5" y="3" width="6" height="2"/><rect x="0.5" y="5.5" width="6" height="2"/></svg>
 <svg class="a" style="left:973.5px;top:268.5px" width="6" height="5" viewBox="0 0 6 5"><path d="M0.8 1L3 3.5 5.2 1" fill="none" stroke="#e0e0e0" stroke-width="1"/></svg>
  <svg class="a" style="left:0;top:0" width="1200" height="440" viewBox="0 0 1200 440">
  <g transform="translate(987 256.3) scale(0.0328 0.0307) translate(-338 -88)"><use href="#art"/></g>
 </svg>
 <div class="a" style="left:1004px;top:255.6px;width:107px;height:21.9px;background:#1e4fa2"></div>
 <div class="a" style="left:1111.5px;top:255.6px;width:21.5px;height:21.9px;background:#1e4fa2;border-left:1px solid #163c7e"></div>
 <div class="t" style="left:1009.9px;top:263.2px;font-size:6.5px;font-weight:bold;color:#f4f4f4">Laag 1</div>
 <!-- tree bar -->
 <div class="a" style="left:971.75px;top:277.5px;width:3.75px;height:135.5px;background:#4a4a4a"></div>
 <!-- rows 2-7 -->
 <div class="a" style="left:975.5px;top:277.5px;width:157.5px;height:135.5px;background:#2e2e2e"></div>
 <div class="a" style="left:986px;top:277.5px;width:22.5px;height:135.5px;background:#262626"></div>
 <div class="a" style="left:1111px;top:277.5px;width:1px;height:158px;background:#1f1f1f"></div>
 <div class="a" style="left:975.5px;top:299.2px;width:157.5px;height:0.8px;background:#242424"></div>
 <div class="a" style="left:975.5px;top:322.4px;width:157.5px;height:0.8px;background:#242424"></div>
 <div class="a" style="left:975.5px;top:345px;width:157.5px;height:0.8px;background:#242424"></div>
 <div class="a" style="left:975.5px;top:367.5px;width:157.5px;height:0.8px;background:#242424"></div>
 <div class="a" style="left:975.5px;top:390px;width:157.5px;height:0.8px;background:#242424"></div>
 <!-- row 3 selected -->
 <div class="a" style="left:976.75px;top:299.6px;width:9.25px;height:22.8px;background:#1a60cb"></div>
 <div class="a" style="left:1009.25px;top:299.6px;width:101.75px;height:22.8px;background:#1a60cb"></div>
 <div class="a" style="left:1112px;top:299.6px;width:21px;height:22.8px;background:#1a60cb"></div>
 <!-- frame icons -->
 <svg class="a" style="left:0;top:0" width="1200" height="440" viewBox="0 0 1200 440" fill="none" stroke="#9a9a9a" stroke-width="0.8">
  <rect x="979.2" y="284.8" width="4.5" height="6.5"/><path d="M980.5 286.6H982.4M981.45 286.6V289.5"/>
  <rect x="979.2" y="307.6" width="4.5" height="6.5" stroke="#a8c4f0"/><path d="M980.5 309.4H982.4M981.45 309.4V312.3" stroke="#a8c4f0"/>
  <rect x="979.2" y="330.8" width="4.5" height="6.5"/><path d="M980.5 332.6H982.4M981.45 332.6V335.5"/>
  <rect x="979.2" y="353.4" width="4.5" height="6.5"/><path d="M980.5 355.2H982.4M981.45 355.2V358.1"/>
  <path d="M979.6 376.5L982.2 379 979.6 381.5" stroke="#e0e0e0" stroke-width="1"/>
  <g fill="#cfcfcf" stroke="none"><rect x="979" y="398" width="1.6" height="1.6"/><rect x="982.3" y="399.5" width="1.6" height="1.6"/><rect x="979" y="403" width="1.6" height="1.6"/><rect x="982.3" y="404.5" width="1.6" height="1.6"/></g>
  <!-- eyes -->
  <g stroke="none" fill="#e8e8e8">
   <path d="M1117.8 266.5Q1121.3 262.8 1124.8 266.5 1121.3 270.2 1117.8 266.5Z"/>
   <path d="M1117.8 288.3Q1121.3 284.6 1124.8 288.3 1121.3 292 1117.8 288.3Z"/>
   <path d="M1117.8 311Q1121.3 307.3 1124.8 311 1121.3 314.7 1117.8 311Z"/>
   <path d="M1117.8 334.2Q1121.3 330.5 1124.8 334.2 1121.3 337.9 1117.8 334.2Z"/>
   <path d="M1117.8 356.8Q1121.3 353.1 1124.8 356.8 1121.3 360.5 1117.8 356.8Z"/>
   <path d="M1117.8 379.3Q1121.3 375.6 1124.8 379.3 1121.3 383 1117.8 379.3Z"/>
   <path d="M1117.8 401.8Q1121.3 398.1 1124.8 401.8 1121.3 405.5 1117.8 401.8Z"/>
   <path d="M1117.8 424.3Q1121.3 420.6 1124.8 424.3 1121.3 428 1117.8 424.3Z"/>
  </g>
  <g stroke="none">
   <circle cx="1121.3" cy="266.5" r="0.9" fill="#1e4fa2"/><circle cx="1121.3" cy="288.3" r="0.9" fill="#2e2e2e"/><circle cx="1121.3" cy="311" r="0.9" fill="#1a60cb"/>
   <circle cx="1121.3" cy="334.2" r="0.9" fill="#2e2e2e"/><circle cx="1121.3" cy="356.8" r="0.9" fill="#2e2e2e"/><circle cx="1121.3" cy="379.3" r="0.9" fill="#2e2e2e"/>
   <circle cx="1121.3" cy="401.8" r="0.9" fill="#2e2e2e"/><circle cx="1121.3" cy="424.3" r="0.9" fill="#2e2e2e"/>
  </g>
  <!-- group thumb: logo -->
  <g transform="translate(998 379.2) scale(0.44) translate(-497 -651.6)"><use href="#logo"/></g>
 </svg>
 <svg class="a" style="left:0;top:0" width="1200" height="440" viewBox="0 0 1200 440" fill="#fff">
  <g transform="translate(991.6 283.6) scale(0.0795 0.0700) translate(-427 -381)"><use href="#g25"/></g>
  <g transform="translate(988.6 307.5) scale(0.0615 0.0595) translate(-357 -242.75)"><use href="#gsave"/></g>
 </svg>
 <div class="a" style="left:991.7px;top:391.2px;width:12.3px;height:21.5px;background:#10a0d8"></div>
 <div class="t" style="left:1016px;top:285px;font-size:6.8px;color:#6c6c6c">25%</div>
 <div class="t" style="left:1016px;top:307.8px;font-size:6.8px;color:#8aa4cf">save</div>
 <div class="t" style="left:1016px;top:330.8px;font-size:6.8px;color:#6c6c6c">free shipping.</div>
 <div class="t" style="left:1016px;top:353.4px;font-size:6.8px;color:#6c6c6c">buy now.</div>
 <div class="t" style="left:1016px;top:376px;font-size:6.8px;color:#6c6c6c">Group</div>
 <div class="t" style="left:1016px;top:398.5px;font-size:6.8px;color:#6c6c6c">Rectangle</div>
 <!-- row 8 -->
 <div class="a" style="left:972px;top:413px;width:161px;height:22.4px;background:#2e2e2e"></div>
 <div class="a" style="left:971.75px;top:413px;width:7.5px;height:22.4px;background:#3d3d3d"></div>
 <div class="a" style="left:983px;top:413px;width:21px;height:22.4px;background:#2a2a2a"></div>
 <div class="a" style="left:981.2px;top:413px;width:1.8px;height:22.4px;background:#25b89a"></div>
 <div class="a" style="left:973px;top:415.5px;width:5px;height:6px;background:#6a6a6a"></div>
 <svg class="a" style="left:973.2px;top:426.5px" width="5" height="6" viewBox="0 0 5 6"><path d="M1 0.8L3.5 3 1 5.2" fill="none" stroke="#e0e0e0" stroke-width="1"/></svg>
 <div class="a" style="left:1006.2px;top:415px;width:17.3px;height:18.5px;background:#111"></div>
 <div class="a" style="left:1008.5px;top:415px;width:9px;height:18.5px;background:#fff"></div>
 <div class="a" style="left:1017.5px;top:423px;width:6px;height:10.5px;background:#fff"></div>
 <div class="a" style="left:1017.8px;top:426.5px;width:5px;height:5px;border-radius:50%;background:#9a9a9a"></div>
 <div class="t" style="left:1032.5px;top:421px;font-size:6.8px;color:#6c6c6c">A-Stramien</div>
 <svg class="a" style="left:1091px;top:420px" width="8" height="8" viewBox="0 0 8 8"><path d="M1 7L7 1M1.5 4.5L0.8 5.2Q-0.2 6.8 1.2 7.2 2.2 7.5 3 6.7L3.6 6M4.4 2L5 1.3Q6 0.3 7 1 7.8 2 6.8 3L6.2 3.6" fill="none" stroke="#5a5a5a" stroke-width="0.9"/></svg>
 <div class="a" style="left:972px;top:435.4px;width:161px;height:0.8px;background:#1a1a1a"></div>
</div>

<!-- ===== LAYERS TOOLBAR / TRANSFORM ===== -->
<div id="xf">
 <div class="a" style="left:972px;top:657.6px;width:161px;height:1.2px;background:#161616"></div>
 <div class="a" style="left:972px;top:658.8px;width:161px;height:20.7px;background:#393939"></div>
 <svg class="a" style="left:0;top:0" width="1200" height="800" viewBox="0 0 1200 800" fill="none" stroke-width="0.9">
  <g stroke="#8a8a8a"><path d="M983 668V675H975.2V667.2H980"/><path d="M978.5 672.5L984.5 666.2"/></g>
  <rect x="1008" y="665.5" width="9.5" height="9.5" fill="#e8e8e8"/>
  <text x="1008.8" y="673.8" font-family="Liberation Sans" font-weight="bold" font-size="7.2" fill="#222" letter-spacing="-0.8">FX</text>
  <rect x="1021.3" y="665.5" width="9.8" height="9.5" fill="#e8e8e8"/><circle cx="1026.2" cy="670.25" r="2.7" fill="#222"/>
  <path d="M1034.8 665.5H1043M1034.8 675H1043M1035.5 665.5L1038.9 670.25 1035.5 675H1042.3L1038.9 670.25 1042.3 665.5Z" stroke="#e8e8e8" stroke-width="1.2" fill="#e8e8e8"/>
  <circle cx="1052.7" cy="670.3" r="4.9" stroke="#e8e8e8" stroke-width="1.1"/><path d="M1049.2 673.8A4.9 4.9 0 0 1 1056.2 666.8Z" fill="#e8e8e8"/>
  <rect x="1077.2" y="665.5" width="9.5" height="9.5" rx="1" stroke="#cfcfcf"/><circle cx="1080.8" cy="669.5" r="2.3" fill="#cfcfcf"/><rect x="1081.2" y="670.2" width="4" height="3.2" fill="#cfcfcf" stroke="#393939" stroke-width="0.6"/>
  <path d="M1090.6 667V675H1100.2V668.2H1095.3L1094 666.5H1090.6Z" stroke="#9a9a9a"/>
  <g fill="#e8e8e8"><rect x="1104" y="665.5" width="1.6" height="1.6"/><rect x="1107.2" y="665.5" width="1.6" height="1.6"/><rect x="1110.4" y="665.5" width="1.6" height="1.6"/>
   <rect x="1105.6" y="667.1" width="1.6" height="1.6"/><rect x="1108.8" y="667.1" width="1.6" height="1.6"/><rect x="1112" y="667.1" width="1.4" height="1.6"/>
   <rect x="1104" y="668.7" width="1.6" height="1.6"/><rect x="1107.2" y="668.7" width="1.6" height="1.6"/><rect x="1110.4" y="668.7" width="1.6" height="1.6"/>
   <rect x="1105.6" y="670.3" width="1.6" height="1.6"/><rect x="1108.8" y="670.3" width="1.6" height="1.6"/><rect x="1112" y="670.3" width="1.4" height="1.6"/>
   <rect x="1104" y="671.9" width="1.6" height="1.6"/><rect x="1107.2" y="671.9" width="1.6" height="1.6"/><rect x="1110.4" y="671.9" width="1.6" height="1.6"/>
   <rect x="1105.6" y="673.5" width="1.6" height="1.6"/><rect x="1108.8" y="673.5" width="1.6" height="1.6"/><rect x="1112" y="673.5" width="1.4" height="1.6"/></g>
  <path d="M1118.3 667H1126M1120.5 667V665.8H1123.8V667M1119 667L1119.6 675.3H1124.7L1125.3 667M1121 669V673.5M1123.3 669V673.5" stroke="#8a8a8a"/>
 </svg>
 <!-- transform tabs -->
 <div class="a" style="left:972px;top:679.5px;width:161px;height:1px;background:#1a1a1a"></div>
 <div class="a" style="left:972px;top:680.4px;width:161px;height:16px;background:#232323"></div>
 <div class="a" style="left:976px;top:683.5px;width:2.3px;height:9.8px;border-radius:1px;background:#4a4a4a"></div>
 <div class="a" style="left:982.3px;top:683.4px;width:36.3px;height:10.8px;border-radius:3px;background:#3b3b3b"></div>
 <div class="t" style="left:985.7px;top:685.4px;font-size:6.6px;color:#f0f0f0">Transform</div>
 <div class="t" style="left:1022.8px;top:685.4px;font-size:6.6px;color:#a8a8a8">Navigator</div>
 <div class="t" style="left:1059px;top:685.4px;font-size:6.7px;color:#a8a8a8">History</div>
 <div class="a" style="left:1116.4px;top:684px;width:10.5px;height:9px;border-radius:2.5px;background:#161616;border:1px solid #5a5a5a"></div>
 <svg class="a" style="left:1119.1px;top:686.5px" width="5" height="4" viewBox="0 0 5 4"><path d="M0.5 0.8L2.5 3 4.5 0.8" fill="none" stroke="#f0f0f0" stroke-width="1.1"/></svg>
 <!-- anchor -->
 <div class="a" style="left:983.5px;top:715px;width:21px;height:20.5px;background:#6a6a6a"></div>
 <svg class="a" style="left:0;top:0" width="1200" height="800" viewBox="0 0 1200 800" fill="#9a9a9a">
  <rect x="992.2" y="713" width="2.4" height="2.4"/><rect x="1002.2" y="713" width="2.4" height="2.4"/>
  <rect x="982.2" y="723.3" width="2.4" height="2.4"/><rect x="992.2" y="723.3" width="2.4" height="2.4"/><rect x="1002.2" y="723.3" width="2.4" height="2.4"/>
  <rect x="982.2" y="733.5" width="2.4" height="2.4"/><rect x="992.2" y="733.5" width="2.4" height="2.4"/><rect x="1002.2" y="733.5" width="2.4" height="2.4"/>
  <rect x="980.1" y="712" width="6.1" height="5.8" fill="#fff"/>
 </svg>
 <div class="t" style="left:1018.3px;top:708.2px;font-size:6.8px;color:#9a9a9a">X:</div>
 <div class="t" style="left:1018.3px;top:721.5px;font-size:6.8px;color:#9a9a9a">Y:</div>
 <div class="t" style="left:1018.3px;top:737.3px;font-size:6.8px;color:#9a9a9a">R:</div>
 <div class="t" style="left:1070.5px;top:708.2px;font-size:6.8px;color:#9a9a9a">W:</div>
 <div class="t" style="left:1071px;top:721.5px;font-size:6.8px;color:#9a9a9a">H:</div>
 <div class="t" style="left:1071px;top:737.3px;font-size:6.8px;color:#9a9a9a">S:</div>
 <div class="a" style="left:1027.9px;top:706px;width:35.9px;height:10.6px;background:#232323"></div>
 <div class="a" style="left:1027.9px;top:719.5px;width:35.9px;height:10.6px;background:#232323"></div>
 <div class="a" style="left:1027.9px;top:735.7px;width:35.9px;height:10.4px;background:#232323"></div>
 <div class="a" style="left:1081.8px;top:706px;width:35.4px;height:10.6px;background:#232323"></div>
 <div class="a" style="left:1081.8px;top:719.5px;width:35.4px;height:10.6px;background:#232323"></div>
 <div class="a" style="left:1081.8px;top:735.7px;width:35.4px;height:10.4px;background:#232323"></div>
 <div class="a" style="left:1057px;top:735.7px;width:6.8px;height:10.4px;background:#2a2a2a"></div>
 <div class="a" style="left:1110.4px;top:735.7px;width:6.8px;height:10.4px;background:#2a2a2a"></div>
 <div class="t" style="left:1029.2px;top:708.3px;font-size:6.8px;color:#f0f0f0">-4,5 mm</div>
 <div class="t" style="left:1029.2px;top:721.8px;font-size:6.8px;color:#f0f0f0">52,2 mm</div>
 <div class="t" style="left:1029.2px;top:738px;font-size:6.8px;color:#f0f0f0">0 &deg;</div>
 <div class="t" style="left:1083px;top:708.3px;font-size:6.8px;color:#f0f0f0">110,8 mm</div>
 <div class="t" style="left:1083px;top:721.8px;font-size:6.8px;color:#f0f0f0">38,5 mm</div>
 <div class="t" style="left:1083px;top:738px;font-size:6.8px;color:#f0f0f0">0 &deg;</div>
 <svg class="a" style="left:1058px;top:739.5px" width="5" height="4" viewBox="0 0 5 4"><path d="M0.5 0.8L2.5 3 4.5 0.8" fill="none" stroke="#ddd" stroke-width="1"/></svg>
 <svg class="a" style="left:1111.3px;top:739.5px" width="5" height="4" viewBox="0 0 5 4"><path d="M0.5 0.8L2.5 3 4.5 0.8" fill="none" stroke="#ddd" stroke-width="1"/></svg>
 <svg class="a" style="left:1121px;top:711.5px" width="6" height="14" viewBox="0 0 6 14"><path d="M1 5V2.2Q1 1 3 1 5 1 5 2.2V5M1 9V11.8Q1 13 3 13 5 13 5 11.8V9" fill="none" stroke="#6a6a6a" stroke-width="1"/></svg>
 <svg class="a" style="left:1096px;top:751px" width="12" height="11" viewBox="0 0 12 11"><path d="M7 1H10.5V9.5H8M4 1H3" fill="none" stroke="#c8c8c8" stroke-width="0.9"/><rect x="1" y="4.5" width="6" height="5.5" rx="1.5" fill="#e8e8e8"/></svg>
 <svg class="a" style="left:1112.5px;top:755px" width="5" height="4" viewBox="0 0 5 4"><path d="M0 0H5L2.5 3Z" fill="#bbb"/></svg>
</div>

<!-- ===== STATUS BAR ===== -->
<div id="status">
 <div class="a" style="left:95.3px;top:772px;width:59.4px;height:11px;background:#292929"></div>
 <svg class="a" style="left:0;top:0" width="1200" height="800" viewBox="0 0 1200 800">
  <g fill="#555"><rect x="76.3" y="774.5" width="0.9" height="5.5"/><path d="M81.5 774.5V780L77.8 777.25Z"/><path d="M91.5 774.5V780L87.5 777.25Z"/></g>
  <path d="M157.8 774.3V780.3L162.3 777.3Z" fill="#e8e8e8"/>
  <g fill="#555"><path d="M167.8 774.5V780L171.5 777.25Z"/><rect x="172" y="774.5" width="0.9" height="5.5"/></g>
  <g fill="none" stroke="#8a8a8a" stroke-width="0.9"><rect x="179.5" y="773.3" width="7" height="8.5" rx="1"/><path d="M181 775.5H185"/></g>
  <g fill="none" stroke="#b8b8b8" stroke-width="0.9"><rect x="202.7" y="773.3" width="5" height="6"/><rect x="205" y="775.6" width="5" height="6.2"/></g>
  <g fill="none" stroke="#5a5a5a" stroke-width="0.9"><rect x="215.3" y="773.3" width="6.5" height="8.5" rx="1"/><path d="M217 776H220M217 778H220"/></g>
 </svg>
 <div class="t" style="left:118.6px;top:774.3px;font-size:6.6px;color:#eaeaea">1 of 1</div>
 <div class="t" style="left:238px;top:774.3px;font-size:6.7px;color:#bdbdbd">'save' selected. <b style="color:#fff">Drag</b> to move selection. <b style="color:#fff">Click</b> another object to select it. <b style="color:#fff">Click</b> on an empty area to deselect selection. <svg style="display:inline-block;vertical-align:-1px" width="7" height="7" viewBox="0 0 7 7"><path d="M6 0.5V3.5H1.5M3 2L1.3 3.5 3 5" fill="none" stroke="#fff" stroke-width="1.1"/></svg> to enter move/duplicate values.</div>
 <div class="a" style="left:970px;top:771.5px;width:1.5px;height:12px;background:#1c1c1c"></div>
 <div class="t" style="left:974.7px;top:774.3px;font-size:6.6px;color:#eaeaea">flyer-smal-2.idml (125.7%)</div>
 <svg class="a" style="left:1122px;top:773px" width="9" height="9" viewBox="0 0 10 10"><path d="M5 0.3L6.2 3.6 9.7 3.7 6.9 5.9 7.9 9.3 5 7.3 2.1 9.3 3.1 5.9 0.3 3.7 3.8 3.6Z" fill="#9a9a9a"/></svg>
</div>
<!-- tabs text -->
<div class="t" style="left:413.5px;top:74.2px;font-size:6.2px;color:#8a8a8a">&lt;Untitled&gt; [M]</div>
<div class="t" style="left:753px;top:74.2px;font-size:6.4px;color:#e6e6e6">flyer-smal-2.idml [M]</div>

<!-- page -->
<svg class="a" style="left:0;top:0" width="1200" height="800" viewBox="0 0 1200 800">
 <defs>
  <g id="art">
   <rect x="338" y="88" width="327.5" height="652.5" fill="#089cd3"/>
   <g fill="#231f20">
    <path fill-rule="evenodd" d="M442 169.4H470Q476 169.4 476 175.4V192Q476 198 473 201.5Q476 205 476 211V229Q476 235 470 235H442Z M453 178.75V196.9H462Q464 196.9 464 194.9V180.75Q464 178.75 462 178.75Z M453 206.9V225H462Q464 225 464 223V208.9Q464 206.9 462 206.9Z"/>
    <path d="M483.75 169.4H495V223Q495 225 497 225H504Q506 225 506 223V169.4H517.5V228Q517.5 235 510.5 235H490.75Q483.75 235 483.75 228Z"/>
    <path d="M523.75 169.4H540L543.5 193.75L548.75 169.4H564.4L549.4 208V235H538.75V208Z"/>
    <path d="M394.1 540.3H414.3V546.5H401V558H411.6V564H401V581.3H394.1Z"/>
    <path fill-rule="evenodd" d="M419.4 540.3H435.5Q440 540.3 440 544.8V562Q440 565.5 437 566.5L440.5 581.3H433.5L430.5 566.8H426.2V581.3H419.4Z M426.2 546.5V560H431.5Q433 560 433 558.5V548Q433 546.5 431.5 546.5Z"/>
    <path d="M445.5 540.3H466.1V546.5H452.4V558H462.5V564H452.4V575.4H466.1V581.3H445.5Z"/>
    <path d="M471.2 540.3H491.8V546.5H478.1V558H488.2V564H478.1V575.4H491.8V581.3H471.2Z"/>
    <path d="M510.5 544.5Q510.5 540.3 514.5 540.3H526.7Q530.7 540.3 530.7 544.5V553.3H523.5V546.5H517.5V556.6L530.7 560.7V577.3Q530.7 581.3 526.7 581.3H514.5Q510.5 581.3 510.5 577.3V567.6H517.5V575.4H523.5V567L510.5 563Z"/>
    <path d="M536.2 540.3H543V558H549V540.3H555.9V581.3H549V564H543V581.3H536.2Z"/>
    <path d="M561.9 540.3H568.3V581.3H561.9Z"/>
    <path fill-rule="evenodd" d="M574.7 540.3H590Q594.4 540.3 594.4 544.7V563.2Q594.4 567.6 590 567.6H581.5V581.3H574.7Z M581.5 546.5V561.6H586.5Q587.8 561.6 587.8 560.3V547.8Q587.8 546.5 586.5 546.5Z"/>
    <path d="M600.4 559.8H610V566.2H600.4Z"/>
   </g>
   <g fill="#ffffff">
    <g id="gsave"><path id="ws1" d="M357 250Q357 242.75 365 242.75H413Q420.6 242.75 420.6 250V284.4H399V263.75H379.4V292L420.6 305V361Q420.6 368.75 413 368.75H365Q357 368.75 357 361V326.6H379.4V347H399V318L357 305Z"/>
    <path id="ws2" fill-rule="evenodd" d="M430 368.75L456 243H486L509 368.75H486.5L482 343H457L452 368.75Z M469 270L480 325H459Z"/>
    <path id="ws3" d="M503 243H527L539 328L554 243H577L550 368.75H528Z"/>
    <path id="ws4" d="M590 243H652V263H611V295H643V316H611V348H652V368.75H590Z"/></g>
    <g id="g25"><path id="ws5" d="M427 389Q427 381 435 381H486Q494 381 494 389V449L449 472V492H470V483H494V514H427V455L471 434V403H449V425H427Z"/>
    <path id="ws6" d="M511 381H576V403H534V429L576 441V506Q576 514 568 514H519Q511 514 511 506V482H534V492H554V458L511 447Z"/></g>
    <g id="logo" transform="translate(497 651.6) rotate(-45) scale(1.1) translate(-18.2 0)" fill="none" stroke="#fff" stroke-width="2.8" stroke-linejoin="round">
     <path d="M7.5 -13.6H3.6Q1.4 -13.6 1.4 -11.4V-4.6Q1.4 -2.4 3.6 -2.4H7.5"/>
     <path d="M10.1 -15V-2.4H15"/>
     <path d="M17.6 -9.5V-1"/><circle cx="17.6" cy="-13.3" r="1.6" fill="#fff" stroke="none"/>
     <path d="M27.7 -13.6H23.8Q21.6 -13.6 21.6 -11.4V-4.6Q21.6 -2.4 23.8 -2.4H27.7"/>
     <path d="M30.3 -15V-1M36 -15L31.6 -8 36 -1"/>
     <path d="M10 2.4H5.9Q3.9 2.4 3.9 4.4V6Q3.9 8 5.9 8H6.6Q8.6 8 8.6 10V11.6Q8.6 13.6 6.6 13.6H2.5"/>
     <path d="M12.6 1V15M17.3 1V15M12.6 8H17.3"/>
     <rect x="19.9" y="1" width="7.5" height="14" rx="3.2" fill="#fff" stroke="none"/><path d="M23.65 1V5.5M19.9 5.5H27.4" stroke="#089cd3" stroke-width="0.9"/>
     <path d="M30 15V2.4H33.4Q34.6 2.4 34.6 3.6V7.4Q34.6 8.6 33.4 8.6H30"/>
    </g>
   </g>
  </g>
 </defs>
 <use href="#art"/>
 <rect x="337.4" y="87.4" width="329" height="654" fill="none" stroke="#1c1a1a" stroke-width="0.9"/><rect x="338.35" y="88.35" width="326.8" height="651.8" fill="none" stroke="#a8bcc4" stroke-width="0.7" opacity="0.8"/>
 <!-- guides -->
 <rect x="380.7" y="129.7" width="243.1" height="568.8" fill="none" stroke="#8c6cf0" stroke-width="1"/>
 <g fill="none" stroke="#4a8ef2" stroke-width="0.9" opacity="0.85">
  <rect x="346.4" y="176.5" width="310.9" height="67"/>
  <rect x="346.4" y="397.3" width="311" height="133"/>
  <rect x="346.4" y="545" width="310.6" height="41"/>
 </g>
 <g stroke="#5b8ff0" stroke-width="1" fill="none">
  <rect x="324.2" y="257.7" width="360.8" height="126"/>
  <line x1="505" y1="240" x2="505" y2="257.7"/>
 </g>
 <g fill="#ffffff" stroke="#5b8ff0" stroke-width="0.8">
  <circle cx="324.2" cy="257.7" r="2.3"/><circle cx="324.2" cy="320.7" r="2.3"/><circle cx="324.2" cy="383.7" r="2.3"/>
  <circle cx="685" cy="257.7" r="2.3"/><circle cx="685" cy="320.7" r="2.3"/><circle cx="685" cy="383.7" r="2.3"/>
  <circle cx="505" cy="257.7" r="2.1"/><circle cx="505" cy="383.7" r="2.1"/><circle cx="505" cy="240" r="2.1"/>
  <circle cx="692" cy="390.5" r="2.3"/>
 </g>
 <path d="M322.5 280.5L327 283 322.5 285.5Z M683.3 355.5L687.8 358 683.3 360.5Z" fill="#ffffff"/>
 <g fill="#ffffff" stroke="#e0605a" stroke-width="0.7">
  <circle cx="346.4" cy="190" r="1.8"/><circle cx="657.3" cy="229.8" r="1.8"/>
  <circle cx="346.4" cy="424.9" r="1.8"/><circle cx="657.3" cy="503.8" r="1.8"/>
  <circle cx="346.4" cy="553.3" r="1.8"/><circle cx="657.3" cy="578.3" r="1.8"/>
 </g>

 <clipPath id="wclip"><use href="#ws1"/><use href="#ws2"/><use href="#ws3"/><use href="#ws4"/><use href="#ws5"/><use href="#ws6"/></clipPath>
 <g clip-path="url(#wclip)" stroke-width="1" fill="none">
  <path d="M380.7 129.7V698.5M623.8 129.7V698.5" stroke="#f070f0"/>
  <path d="M324 257.7H685M324 383.7H685M346 397.3H657.4M346 243.5H657.3" stroke="#9cb8f8"/>
 </g>
 <!-- thumbnail -->
 <rect x="155.5" y="125.5" width="44.5" height="85.5" rx="2" fill="#6e6966"/>
 <g transform="translate(157 127) scale(0.1252 0.1257) translate(-338 -88)"><use href="#art"/></g>
</svg>
</body></html>
